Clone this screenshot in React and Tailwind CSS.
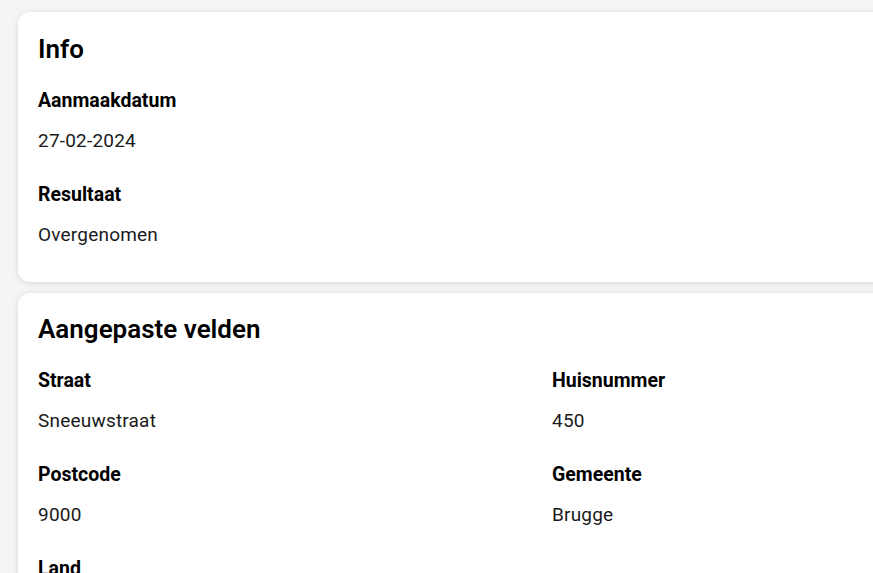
export default function App() {
  const info = [
    { label: 'Aanmaakdatum', value: '27-02-2024' },
    { label: 'Resultaat', value: 'Overgenomen' },
  ];

  const fields = [
    { label: 'Straat', value: 'Sneeuwstraat' },
    { label: 'Huisnummer', value: '450' },
    { label: 'Postcode', value: '9000' },
    { label: 'Gemeente', value: 'Brugge' },
    { label: 'Land', value: 'België' },
  ];

  return (
    <div className="h-[573px] overflow-hidden bg-[#f5f5f5] pl-[18px] pt-[12px] font-['Roboto',sans-serif] text-[#1a1a1a]">
      <div className="flex w-[1100px] flex-col gap-[11px]">
        {/* Info card */}
        <section className="rounded-[12px] bg-white px-5 pb-[36px] pt-[20px] shadow-[0_1px_6px_rgba(0,0,0,0.12)]">
          <h2 className="mb-[24px] text-[26px] font-semibold leading-[34px] text-black">Info</h2>
          <div className="flex flex-col gap-[32px]">
            {info.map((item) => (
              <div key={item.label}>
                <div className="text-[19.5px] font-bold leading-[22px] text-black">{item.label}</div>
                <div className="mt-[18px] text-[19px] leading-[22px] tracking-[0.2px]">{item.value}</div>
              </div>
            ))}
          </div>
        </section>

        {/* Changed fields */}
        <section className="rounded-[12px] bg-white px-5 pb-[36px] pt-[19px] shadow-[0_1px_6px_rgba(0,0,0,0.12)]">
          <h2 className="mb-[24px] text-[26px] font-semibold leading-[34px] text-black">Aangepaste velden</h2>
          <div className="grid grid-cols-[514px_1fr] gap-y-[32px]">
            {fields.map((item) => (
              <div key={item.label}>
                <div className="text-[19.5px] font-bold leading-[22px] text-black">{item.label}</div>
                <div className="mt-[18px] text-[19px] leading-[22px] tracking-[0.2px]">{item.value}</div>
              </div>
            ))}
          </div>
        </section>
      </div>
    </div>
  );
}
